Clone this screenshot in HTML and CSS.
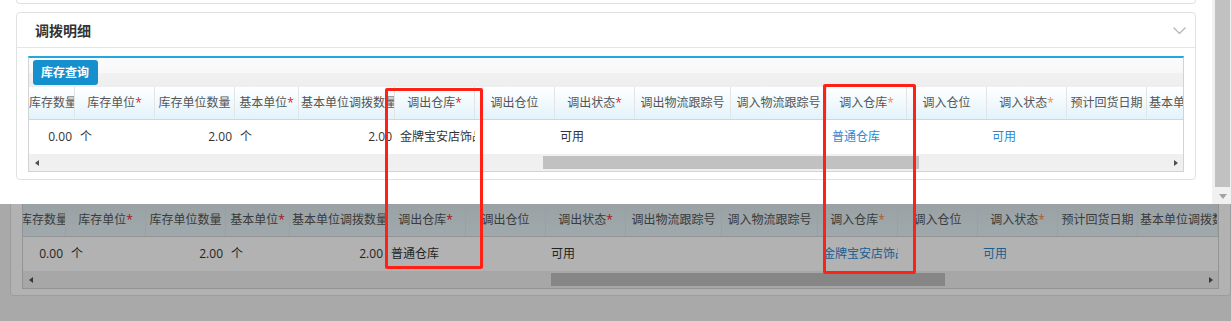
FILE: index.html
```html
<!DOCTYPE html>
<html lang="zh-CN">
<head>
    <meta charset="UTF-8">
    <title>调拨明细</title>
    <link rel="stylesheet" href="styles.css">
</head>
<body>
    <div class="modal">
        <div class="modal-body">
            <div class="card card-prev"></div>

            <div class="card card-detail">
                <div class="card-head">
                    <span class="card-title">调拨明细</span>
                    <svg class="chevron" width="13" height="7" viewBox="0 0 13 7">
                        <polyline points="0.5,0.5 6.5,6.5 12.5,0.5" fill="none" stroke="#b4b4b4" stroke-width="1.2"/>
                    </svg>
                </div>
                <div class="card-body">
                    <div class="grid grid-top">
                        <div class="grid-tools">
                            <button class="btn">库存查询</button>
                        </div>
                        <div class="row head">
                            <div class="cell first">库存数量</div>
                            <div class="cell">库存单位<span class="req">*</span></div>
                            <div class="cell">库存单位数量</div>
                            <div class="cell">基本单位<span class="req">*</span></div>
                            <div class="cell">基本单位调拨数量</div>
                            <div class="cell">调出仓库<span class="req">*</span></div>
                            <div class="cell">调出仓位</div>
                            <div class="cell">调出状态<span class="req">*</span></div>
                            <div class="cell">调出物流跟踪号</div>
                            <div class="cell">调入物流跟踪号</div>
                            <div class="cell">调入仓库<span class="req req-in">*</span></div>
                            <div class="cell">调入仓位</div>
                            <div class="cell">调入状态<span class="req req-in">*</span></div>
                            <div class="cell">预计回货日期</div>
                            <div class="cell">基本单位调拨数量</div>
                        </div>
                        <div class="row body">
                            <div class="cell num">0.00</div>
                            <div class="cell">个</div>
                            <div class="cell num">2.00</div>
                            <div class="cell">个</div>
                            <div class="cell num">2.00</div>
                            <div class="cell">金牌宝安店饰品</div>
                            <div class="cell"></div>
                            <div class="cell">可用</div>
                            <div class="cell"></div>
                            <div class="cell"></div>
                            <div class="cell link">普通仓库</div>
                            <div class="cell"></div>
                            <div class="cell link">可用</div>
                            <div class="cell"></div>
                            <div class="cell"></div>
                        </div>
                        <div class="hscroll">
                            <span class="arrow"><i class="tri tri-left"></i></span>
                            <span class="track"><span class="thumb"></span></span>
                            <span class="arrow"><i class="tri tri-right"></i></span>
                        </div>
                    </div>
                </div>
            </div>
        </div>

        <div class="vscroll">
            <div class="vthumb"></div>
            <i class="tri tri-down"></i>
        </div>
    </div>

    <!-- page behind the dialog, dimmed by the backdrop -->
    <div class="page">
        <div class="sidebar"></div>
        <div class="page-main">
            <div class="card card-back">
                <div class="grid grid-back">
                    <div class="row head">
                        <div class="cell first">库存数量</div>
                        <div class="cell">库存单位<span class="req">*</span></div>
                        <div class="cell">库存单位数量</div>
                        <div class="cell">基本单位<span class="req">*</span></div>
                        <div class="cell">基本单位调拨数量</div>
                        <div class="cell">调出仓库<span class="req">*</span></div>
                        <div class="cell">调出仓位</div>
                        <div class="cell">调出状态<span class="req">*</span></div>
                        <div class="cell">调出物流跟踪号</div>
                        <div class="cell">调入物流跟踪号</div>
                        <div class="cell">调入仓库<span class="req req-in">*</span></div>
                        <div class="cell">调入仓位</div>
                        <div class="cell">调入状态<span class="req req-in">*</span></div>
                        <div class="cell">预计回货日期</div>
                        <div class="cell">基本单位调拨数量</div>
                    </div>
                    <div class="row body">
                        <div class="cell num">0.00</div>
                        <div class="cell">个</div>
                        <div class="cell num">2.00</div>
                        <div class="cell">个</div>
                        <div class="cell num">2.00</div>
                        <div class="cell">普通仓库</div>
                        <div class="cell"></div>
                        <div class="cell">可用</div>
                        <div class="cell"></div>
                        <div class="cell"></div>
                        <div class="cell link">金牌宝安店饰品</div>
                        <div class="cell"></div>
                        <div class="cell link">可用</div>
                        <div class="cell"></div>
                        <div class="cell"></div>
                    </div>
                    <div class="hscroll">
                        <span class="arrow"><i class="tri tri-left"></i></span>
                        <span class="track"><span class="thumb"></span></span>
                        <span class="arrow"><i class="tri tri-right"></i></span>
                    </div>
                </div>
            </div>
        </div>
    </div>

    <!-- red annotation boxes -->
    <div class="mark mark-out"></div>
    <div class="mark mark-in"></div>
</body>
</html>
```

FILE: styles.css
```css
* {
    box-sizing: border-box;
}

body {
    margin: 0;
    width: 1231px;
    height: 321px;
    overflow: hidden;
    position: relative;
    font-family: "Open Sans", "Noto Sans CJK SC", sans-serif;
    font-size: 12px;
    color: #333;
    background: #fff;
}

/* --- Dialog --- */
.modal {
    display: flex;
    height: 204px;
    background: #fff;
}

.modal-body {
    flex: 1;
    padding: 0 16px;
    overflow: hidden;
}

.card {
    background: #fff;
    border: 1px solid #e1e1e1;
    border-radius: 4px;
}

.card-prev {
    height: 4px;
    border-top: none;
    border-radius: 0 0 4px 4px;
}

.card-detail {
    margin-top: 8px;
}

.card-head {
    height: 35px;
    display: flex;
    align-items: center;
    justify-content: space-between;
    padding: 0 9px 0 18px;
    border-bottom: 1px solid #e5e5e5;
}

.card-title {
    font-size: 14px;
    font-weight: bold;
    color: #333;
}

.chevron {
    display: block;
}

.card-body {
    padding: 8px 11px 7px;
}

/* --- Data grid --- */
.grid {
    border: 1px solid #d3d3d3;
    border-top: 2px solid #26a6e0;
    overflow: hidden;
    background: #fff;
}

.grid-tools {
    height: 29px;
    padding: 2px 4px;
    background: linear-gradient(to bottom, #fbfbfb 0%, #f8f8f8 50%, #f1f1f1 52%, #eeeeee 100%);
}

.btn {
    display: block;
    height: 25px;
    padding: 0 9px 0 8px;
    border: none;
    border-radius: 3px;
    background: #1590cf;
    color: #fff;
    font-family: inherit;
    font-size: 12px;
    font-weight: bold;
    line-height: 25px;
}

.row {
    display: grid;
}

.grid-top .row {
    grid-template-columns: 46px 80px 80px 64px 96px 80px 80px 80px 96px 96px 80px 80px 80px 80px 80px;
}

.grid-back .row {
    grid-template-columns: 43px 80px 80px 64px 96px 80px 80px 80px 96px 96px 80px 80px 80px 80px 80px;
}

.head {
    height: 33px;
    background: linear-gradient(to bottom, #ffffff, #e2f3fb);
    border-bottom: 1px solid #d5d5d5;
}

.head .cell {
    line-height: 32px;
    padding: 0 2px;
    border-right: 1px solid #e4e4e4;
    text-align: center;
    color: #555;
    white-space: nowrap;
    overflow: hidden;
}

.head .cell.first {
    text-align: left;
    padding: 0;
}

.grid-back .head .cell.first {
    text-indent: -3px;
}

.req {
    color: #e0262b;
}

.req-in {
    color: #ef8a3e;
}

.body {
    height: 34px;
    background: #fff;
}

.body .cell {
    line-height: 34px;
    padding: 0 3px 0 5px;
    white-space: nowrap;
    overflow: hidden;
}

.body .num {
    text-align: right;
}

.body .link {
    color: #2a89d3;
}

/* horizontal scroller */
.hscroll {
    display: flex;
    height: 17px;
    background: #f0f0f0;
}

.arrow {
    width: 15px;
    display: flex;
    align-items: center;
    justify-content: center;
}

.track {
    flex: 1;
    display: flex;
    align-items: center;
}

.thumb {
    height: 13px;
    background: #c1c1c1;
}

.grid-top .thumb {
    margin-left: 499px;
    width: 376px;
}

.grid-back .thumb {
    margin-left: 513px;
    width: 394px;
}

.tri {
    display: block;
    width: 0;
    height: 0;
    border-style: solid;
}

.tri-left {
    border-width: 3.5px 4px 3.5px 0;
    border-color: transparent #505050 transparent transparent;
}

.tri-right {
    border-width: 3.5px 0 3.5px 4px;
    border-color: transparent transparent transparent #505050;
}

.tri-down {
    margin-top: 7px;
    border-width: 5px 4px 0 4px;
    border-color: #a3a3a3 transparent transparent transparent;
}

/* vertical scroller of the dialog */
.vscroll {
    width: 19px;
    padding-left: 2px;
    background: #f1f1f1;
    display: flex;
    flex-direction: column;
    align-items: center;
}

.vthumb {
    width: 15px;
    height: 187px;
    background: #c1c1c1;
}

/* --- Page behind the backdrop --- */
.page {
    position: relative;
    display: flex;
    height: 117px;
    background: #f3f3f3;
}

.page::after {
    content: "";
    position: absolute;
    top: 0;
    left: 0;
    right: 0;
    bottom: 0;
    background: rgba(0, 0, 0, 0.3);
}

.sidebar {
    width: 2px;
    background: #2c3d45;
}

.page-main {
    flex: 1;
    padding: 0 11px 0 10px;
}

.card-back {
    border-top: none;
    border-radius: 0 0 4px 4px;
    padding: 0 11px 6px;
}

.grid-back {
    border-top: none;
}

.grid-back .head {
    background: linear-gradient(to bottom, #dde8ec, #e5f2f7);
}

/* --- Annotations --- */
.mark {
    position: absolute;
    z-index: 2;
    border: 3px solid #ff2116;
    border-radius: 2px;
}

.mark-out {
    left: 385px;
    top: 88px;
    width: 98px;
    height: 181px;
}

.mark-in {
    left: 823px;
    top: 84px;
    width: 93px;
    height: 190px;
}
```
